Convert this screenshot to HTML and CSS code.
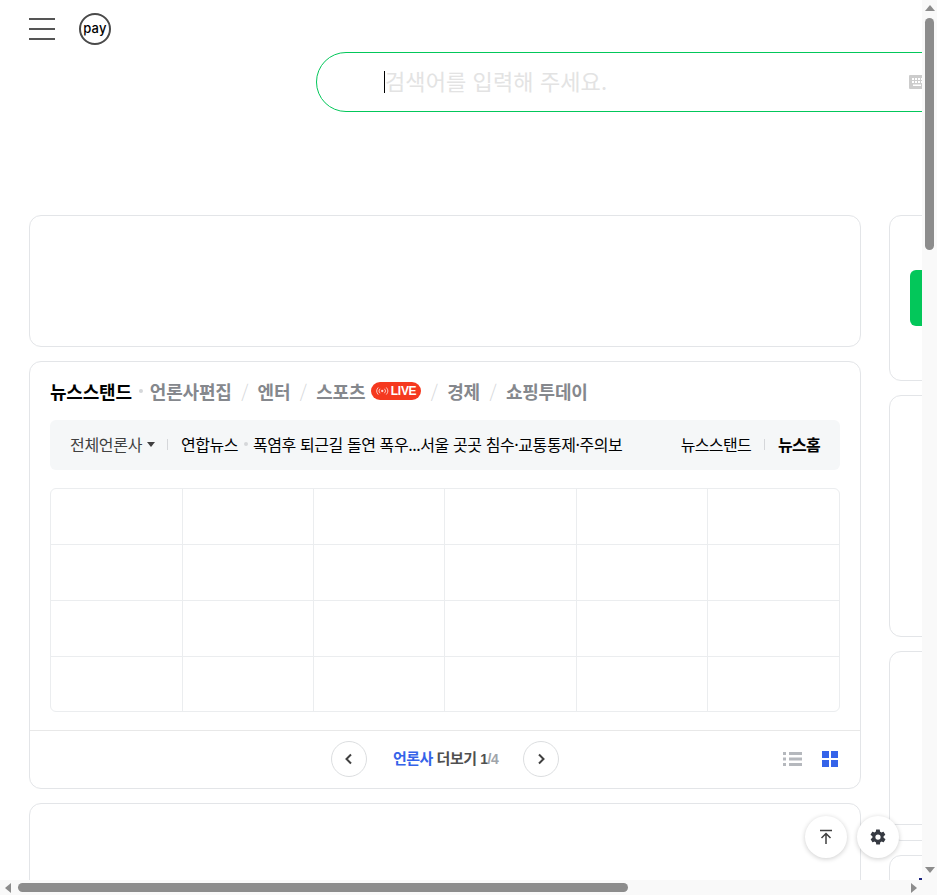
FILE: index.html
```html
<!DOCTYPE html>
<html lang="ko">
<head>
    <meta charset="UTF-8">
    <meta name="viewport" content="width=device-width, initial-scale=1.0">
    <title>NAVER</title>
    <link rel="stylesheet" href="styles.css">
</head>
<body>
    <div class="window">
        <div class="page">
            <header class="top">
                <button class="menu" aria-label="메뉴"><span></span><span></span><span></span></button>
                <a class="pay">pay</a>
            </header>

            <div class="search">
                <span class="caret"></span>
                <span class="placeholder">검색어를 입력해 주세요.</span>
                <svg class="keyboard" width="16" height="14" viewBox="0 0 16 14">
                    <rect width="16" height="14" rx="1" fill="#ccc"/>
                    <path d="M3 3h2v2H3zM6 3h2v2H6zM9 3h2v2H9zM12 3h2v2h-2zM3 6h2v2H3zM6 6h2v2H6zM9 6h2v2H9zM12 6h2v2h-2zM4 9.500h8v1.500H4z" fill="#fff"/>
                </svg>
            </div>

            <main class="layout">
                <div class="col-left">
                    <section class="card card-ad"></section>

                    <section class="card news">
                        <nav class="tabs">
                            <a class="tab on">뉴스스탠드</a>
                            <span class="dot"></span>
                            <a class="tab">언론사편집</a>
                            <span class="slash">/</span>
                            <a class="tab">엔터</a>
                            <span class="slash">/</span>
                            <a class="tab">스포츠</a>
                            <span class="live">
                                <svg width="14" height="10" viewBox="0 0 14 10" fill="none" stroke="#fff" stroke-width="1" opacity="0.8">
                                    <circle cx="7" cy="5" r="1.300" fill="#fff" stroke="none"/>
                                    <path d="M4.500 2.500a3.500 3.500 0 0 0 0 5M9.500 2.500a3.500 3.500 0 0 1 0 5M2.500 1a6 6 0 0 0 0 8M11.500 1a6 6 0 0 1 0 8"/>
                                </svg>
                                LIVE
                            </span>
                            <span class="slash">/</span>
                            <a class="tab">경제</a>
                            <span class="slash">/</span>
                            <a class="tab">쇼핑투데이</a>
                        </nav>

                        <div class="bar">
                            <span class="press">전체언론사</span>
                            <span class="arrow-down"></span>
                            <span class="bar-line"></span>
                            <span class="source">연합뉴스</span>
                            <span class="dot small"></span>
                            <span class="headline">폭염후 퇴근길 돌연 폭우...서울 곳곳 침수·교통통제·주의보</span>
                            <span class="bar-right">
                                <a>뉴스스탠드</a>
                                <span class="bar-line"></span>
                                <a class="strong">뉴스홈</a>
                            </span>
                        </div>

                        <div class="grid" id="pressGrid"></div>

                        <footer class="pager">
                            <span></span>
                            <div class="pager-mid">
                                <button class="round">
                                    <svg width="10" height="12" viewBox="0 0 10 12" fill="none" stroke="#404040" stroke-width="2"><path d="M7 1.500 2.500 6 7 10.500"/></svg>
                                </button>
                                <span class="pager-text"><b class="blue">언론사</b> <b>더보기</b> <b class="num">1</b><b class="num muted">/4</b></span>
                                <button class="round">
                                    <svg width="10" height="12" viewBox="0 0 10 12" fill="none" stroke="#404040" stroke-width="2"><path d="M3 1.500 7.500 6 3 10.500"/></svg>
                                </button>
                            </div>
                            <div class="views">
                                <svg width="19" height="16" viewBox="0 0 19 16" fill="#b5b8bd">
                                    <path d="M0 1h3v3H0zM6 1h13v3H6zM0 6.500h3v3H0zM6 6.500h13v3H6zM0 12h3v3H0zM6 12h13v3H6z"/>
                                </svg>
                                <svg width="16" height="16" viewBox="0 0 16 16" fill="#3563e9">
                                    <path d="M0 0h7v7H0zM9 0h7v7H9zM0 9h7v7H0zM9 9h7v7H9z"/>
                                </svg>
                            </div>
                        </footer>
                    </section>

                    <section class="card card-next"></section>
                </div>

                <aside class="col-right">
                    <section class="card side-login"><div class="login-btn"></div></section>
                    <section class="card side-mid"></section>
                    <section class="card side-low"><div class="side-foot"></div></section>
                    <section class="card side-last"><div class="peek"></div></section>
                </aside>
            </main>
        </div>

        <div class="scroll-v">
            <span class="tri tri-up"></span>
            <span class="thumb-v"></span>
            <span class="tri tri-down"></span>
        </div>
        <div class="scroll-h">
            <span class="tri tri-left"></span>
            <span class="thumb-h"></span>
            <span class="tri tri-right"></span>
        </div>
        <div class="corner"></div>
    </div>

    <div class="floating">
        <button class="float-btn">
            <svg width="16" height="16" viewBox="0 0 16 16" fill="none" stroke="#404040" stroke-width="1.500"><path d="M2 1.500h12M8 15V5M3.500 9 8 4.500 12.500 9"/></svg>
        </button>
        <button class="float-btn">
            <svg width="18" height="18" viewBox="0 0 24 24" fill="#363a42"><path fill-rule="evenodd" d="M19.400 13c.1-.3.100-.7.100-1s0-.7-.1-1l2.100-1.600c.2-.2.200-.4.100-.6l-2-3.500c-.1-.2-.4-.3-.6-.2l-2.500 1c-.5-.4-1.100-.7-1.700-1l-.4-2.600c0-.3-.2-.5-.5-.5h-4c-.3 0-.5.200-.5.500l-.4 2.600c-.6.300-1.200.6-1.700 1l-2.500-1c-.2-.1-.5 0-.6.200l-2 3.500c-.1.200-.1.400.1.600L4.600 11c-.1.300-.1.700-.1 1s0 .7.100 1l-2.100 1.600c-.2.200-.2.400-.1.600l2 3.500c.1.200.4.300.6.200l2.500-1c.5.400 1.100.7 1.700 1l.4 2.600c0 .3.200.5.500.5h4c.3 0 .5-.2.500-.5l.4-2.600c.6-.3 1.200-.6 1.700-1l2.500 1c.2.100.5 0 .6-.2l2-3.500c.1-.2.100-.4-.1-.6L19.400 13zM12 15.500a3.500 3.500 0 1 1 0-7 3.500 3.500 0 0 1 0 7z"/></svg>
        </button>
    </div>

    <script>
        const pressGrid = document.getElementById('pressGrid');
        for (let i = 0; i < 24; i++) {
            const cell = document.createElement('div');
            cell.className = 'cell';
            pressGrid.appendChild(cell);
        }
    </script>
</body>
</html>
```

FILE: styles.css
```css
* {
    box-sizing: border-box;
}

html, body {
    margin: 0;
    height: 100%;
    overflow: hidden;
}

body {
    font-family: "Noto Sans CJK KR", "Noto Sans", sans-serif;
    background: #fff;
    color: #000;
}

button {
    padding: 0;
    border: none;
    background: none;
    font: inherit;
}

.window {
    display: grid;
    grid-template-columns: 922px 15px;
    grid-template-rows: 880px 15px;
    width: 937px;
    height: 895px;
}

.page {
    overflow: hidden;
    width: 922px;
    height: 880px;
}

/* top row */
.top {
    display: flex;
    align-items: center;
    gap: 24px;
    height: 52px;
    padding: 6px 0 0 29px;
}

.menu {
    display: flex;
    flex-direction: column;
    gap: 8px;
    width: 26px;
}

.menu span {
    display: block;
    height: 2px;
    background: #555;
}

.pay {
    display: flex;
    align-items: center;
    justify-content: center;
    width: 32px;
    height: 32px;
    padding-bottom: 2px;
    border: 2px solid #4a4a4a;
    border-radius: 50%;
    font-family: Inter, sans-serif;
    font-size: 13px;
    font-weight: 500;
    letter-spacing: 0.3px;
    line-height: 1;
}

/* search */
.search {
    display: flex;
    align-items: center;
    width: 900px;
    height: 60px;
    margin-left: 316px;
    padding-left: 67px;
    border: 1px solid #03c75a;
    border-radius: 30px;
}

.caret {
    flex: none;
    width: 1px;
    height: 22px;
    background: #000;
}

.placeholder {
    flex: none;
    width: 524px;
    padding-bottom: 4px;
    font-size: 22px;
    letter-spacing: 0.1px;
    color: #e3e3e3;
}

.keyboard {
    flex: none;
}

/* columns */
.layout {
    display: flex;
    gap: 28px;
    width: 1366px;
    margin-top: 103px;
    padding-left: 29px;
}

.col-left, .col-right {
    display: flex;
    flex: none;
    flex-direction: column;
    gap: 14px;
}

.col-left {
    width: 832px;
}

.col-right {
    width: 350px;
}

.card {
    border: 1px solid #e3e5e8;
    border-radius: 12px;
    background: #fff;
}

.card-ad {
    height: 132px;
}

.card-next {
    height: 200px;
}

/* news block */
.news {
    height: 428px;
}

.tabs {
    display: flex;
    align-items: center;
    gap: 10px;
    height: 18px;
    margin: 20px 20px 0;
    font-size: 18px;
    font-weight: 700;
    letter-spacing: -0.2px;
    color: #85888d;
}

.tab.on {
    color: #000;
}

.dot {
    width: 4px;
    height: 4px;
    margin: 0 -3px;
    border-radius: 50%;
    background: #d5d7da;
}

.slash {
    margin: 0 -0.5px;
    font-weight: 300;
    color: #d5d7da;
}

.live {
    display: flex;
    align-items: center;
    gap: 2px;
    width: 50px;
    height: 18px;
    margin-left: -4px;
    padding: 0 5px;
    border-radius: 9px;
    background: #f5391f;
    font-family: "Liberation Sans", sans-serif;
    font-size: 12px;
    letter-spacing: -0.3px;
    color: #fff;
}

.bar {
    display: flex;
    align-items: center;
    height: 50px;
    margin: 20px 20px 0;
    padding: 0 20px 2px;
    border-radius: 6px;
    background: #f5f7f8;
    font-size: 16px;
    letter-spacing: -0.3px;
    white-space: nowrap;
    color: #000;
}

.press {
    color: #404040;
}

.arrow-down {
    width: 0;
    height: 0;
    margin: 0 12px 0 5px;
    border: 4px solid transparent;
    border-top: 5px solid #404040;
    border-bottom: 0;
}

.bar-line {
    width: 1px;
    height: 11px;
    background: #d5d7da;
}

.source {
    margin-left: 13px;
    letter-spacing: -0.5px;
}

.dot.small {
    width: 4px;
    height: 4px;
    margin: 0 5px 0 6px;
}

.headline {
    letter-spacing: -0.42px;
}

.bar-right {
    display: flex;
    align-items: center;
    gap: 13px;
    margin-left: auto;
    letter-spacing: -0.7px;
}

.strong {
    font-weight: 700;
}

.grid {
    display: grid;
    grid-template-columns: 132px 131px 131px 132px 131px 131px;
    grid-template-rows: 56px 56px 56px 54px;
    height: 224px;
    margin: 18px 20px 0;
    border: 1px solid #ebedef;
    border-radius: 6px;
    overflow: hidden;
}

.cell {
    border-right: 1px solid #ebedef;
    border-bottom: 1px solid #ebedef;
}

.cell:nth-child(6n) {
    border-right: none;
}

.cell:nth-last-child(-n+6) {
    border-bottom: none;
}

.pager {
    display: grid;
    grid-template-columns: 1fr auto 1fr;
    align-items: center;
    height: 58px;
    margin-top: 18px;
    padding: 0 22px 2px;
    border-top: 1px solid #e8e8e8;
}

.pager-mid {
    display: flex;
    align-items: center;
    gap: 26px;
}

.round {
    display: flex;
    align-items: center;
    justify-content: center;
    width: 36px;
    height: 36px;
    border: 1px solid #dcdee0;
    border-radius: 50%;
    background: #fff;
}

.pager-text {
    width: 104px;
    padding-bottom: 2px;
    font-size: 15px;
    letter-spacing: -0.5px;
    white-space: nowrap;
    color: #505050;
}

.pager-text b {
    font-weight: 700;
}

.pager-text .blue {
    color: #3563e9;
}

.pager-text .num {
    font-family: "Liberation Sans", sans-serif;
    font-size: 14px;
}

.pager-text .muted {
    color: #a0a4aa;
}

.views {
    display: flex;
    align-items: center;
    justify-content: flex-end;
    gap: 20px;
}

/* right column */
.side-login {
    height: 166px;
    padding: 54px 20px 0;
}

.login-btn {
    height: 56px;
    border-radius: 6px;
    background: #03c75a;
}

.side-mid {
    height: 242px;
}

.side-low {
    height: 190px;
    padding-top: 172px;
}

.side-foot {
    border-top: 1px solid #e3e5e8;
}

.side-last {
    height: 200px;
    padding: 22px 0 0 29px;
}

.peek {
    width: 12px;
    height: 2px;
    background: #1a237e;
}

/* fake browser scrollbars */
.scroll-v, .scroll-h, .corner {
    background: #f9f9f9;
}

.scroll-v {
    display: flex;
    flex-direction: column;
    align-items: center;
    padding: 5px 0 7px;
}

.scroll-h {
    display: flex;
    align-items: center;
    padding: 0 5px;
}

.thumb-v {
    width: 9px;
    height: 232px;
    margin-top: 7px;
    margin-bottom: auto;
    border-radius: 5px;
    background: #8c8c8c;
}

.thumb-h {
    width: 610px;
    height: 9px;
    margin-left: 7px;
    margin-right: auto;
    border-radius: 5px;
    background: #8c8c8c;
}

.tri {
    width: 0;
    height: 0;
    border: 5px solid transparent;
}

.tri-up {
    border-top: 0;
    border-bottom: 6px solid #8c8c8c;
}

.tri-down {
    border-bottom: 0;
    border-top: 6px solid #8c8c8c;
}

.tri-left {
    border-left: 0;
    border-right: 6px solid #8c8c8c;
}

.tri-right {
    border-right: 0;
    border-left: 6px solid #8c8c8c;
}

/* floating buttons */
.floating {
    position: fixed;
    right: 38px;
    bottom: 37px;
    display: flex;
    gap: 10px;
}

.float-btn {
    display: flex;
    align-items: center;
    justify-content: center;
    width: 42px;
    height: 42px;
    border-radius: 50%;
    background: #fff;
    box-shadow: 0 1px 5px rgba(0, 0, 0, 0.2);
}
```
